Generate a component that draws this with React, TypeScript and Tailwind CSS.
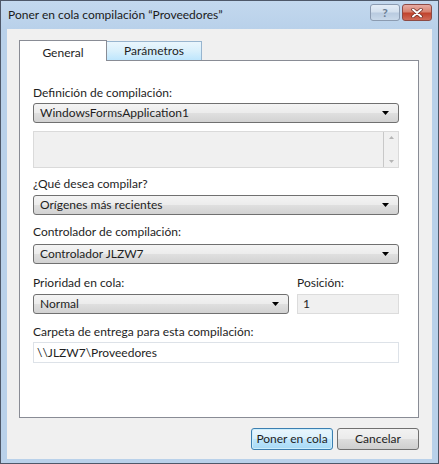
import React from 'react';

const FONT = { fontFamily: 'Lato, "Open Sans", "Noto Sans", sans-serif' };

const Arrow = () => (
  <svg width="7" height="4" viewBox="0 0 7 4" className="shrink-0">
    <path d="M0 0H7L3.5 4Z" fill="#000" />
  </svg>
);

const Combo = ({ value, className = '' }: { value: string; className?: string }) => (
  <div
    className={`h-[20px] flex items-center justify-between pl-[6px] pr-[9px] border border-[#707070] rounded-[3px] bg-[linear-gradient(to_bottom,#f4f4f4_0%,#ececec_48%,#dfdfdf_52%,#d2d2d2_100%)] text-[12px] text-[#1e1e1e] ${className}`}
  >
    <span className="leading-none">{value}</span>
    <Arrow />
  </div>
);

const Label = ({ children, className = '' }: { children: React.ReactNode; className?: string }) => (
  <div className={`h-[16px] leading-[16px] text-[12px] text-[#1e1e1e] ${className}`}>{children}</div>
);

export default function App() {
  return (
    <div style={FONT} className="w-[439px] h-[464px] border border-[#4e5869] bg-[#b9d1ea] flex flex-col">
      {/* Title bar */}
      <div className="h-[28px] flex items-start bg-[linear-gradient(to_bottom,#c3d8ee,#b9d1ea)]">
        <div className="pl-[7px] pt-[5px] text-[12px] text-[#1a1a1a] flex-1">Poner en cola compilación “Proveedores”</div>
        <div className="flex gap-[2px] pt-[3px] pr-[6px]">
          <div className="w-[30px] h-[17px] rounded-[3px] border border-[#8b9bb1] bg-[linear-gradient(to_bottom,#e4edf7_0%,#d3e0ee_45%,#b9cbe0_55%,#c9d9ea_100%)] flex items-center justify-center">
            <span className="text-[12px] font-bold text-[#6b7d93] leading-none">?</span>
          </div>
          <div className="w-[30px] h-[17px] rounded-[3px] border border-[#8d4a44] bg-[linear-gradient(to_bottom,#e8aca3_0%,#d7826f_45%,#c0432d_55%,#d06a57_100%)] flex items-center justify-center">
            <svg width="12" height="10" viewBox="0 0 12 10">
              <path d="M2 1.5L10 8.5M10 1.5L2 8.5" stroke="#6b2a22" strokeWidth="3.4" strokeLinecap="round" />
              <path d="M2 1.5L10 8.5M10 1.5L2 8.5" stroke="#fff" strokeWidth="2" strokeLinecap="round" />
            </svg>
          </div>
        </div>
      </div>

      {/* Client area */}
      <div className="mx-[6px] h-[430px] bg-[#f0f0f0] pl-[12px] pr-[13px] pt-[11px] flex flex-col">
        {/* Tabs */}
        <div className="flex items-end h-[20px]">
          <div className="relative z-10 w-[88px] h-[21px] -mb-px bg-white border border-b-0 border-[#898c95] flex justify-center pt-[3px] text-[12px] text-[#1e1e1e]">
            General
          </div>
          <div className="-ml-px w-[96px] h-[19px] border border-b-0 border-[#98b5cf] bg-[linear-gradient(to_bottom,#eaf6fd,#d9f0fc_50%,#bee6fd_100%)] flex justify-center items-center text-[12px] text-[#1e1e1e]">
            Parámetros
          </div>
        </div>

        {/* Panel */}
        <div className="h-[358px] bg-white border border-[#898c95] pl-[13px] pr-[19px] pt-[24px]">
          <Label>Definición de compilación:</Label>
          <Combo value="WindowsFormsApplication1" className="mt-[2px]" />
          <div className="mt-[8px] h-[37px] border border-[#dadada] bg-[#f0f0f0] flex justify-end">
            <div className="w-[15px] border-l border-[#c8c8c8] flex flex-col items-center justify-between py-[4px]">
              <svg width="5" height="3" viewBox="0 0 5 3"><path d="M2.5 0L5 3H0Z" fill="#b5b5b5" /></svg>
              <svg width="5" height="3" viewBox="0 0 5 3"><path d="M0 0H5L2.5 3Z" fill="#b5b5b5" /></svg>
            </div>
          </div>

          <Label className="mt-[8px]">¿Qué desea compilar?</Label>
          <Combo value="Orígenes más recientes" className="mt-[3px]" />

          <Label className="mt-[9px]">Controlador de compilación:</Label>
          <Combo value="Controlador JLZW7" className="mt-[4px]" />

          <div className="mt-[11px] flex gap-[8px]">
            <div className="w-[256px]">
              <Label>Prioridad en cola:</Label>
              <Combo value="Normal" className="mt-[3px]" />
            </div>
            <div className="flex-1">
              <Label>Posición:</Label>
              <div className="mt-[3px] h-[20px] border border-[#dcdcdc] bg-[#f0f0f0] pl-[5px] flex items-center text-[12px] text-[#1e1e1e]">1</div>
            </div>
          </div>

          <Label className="mt-[10px]">Carpeta de entrega para esta compilación:</Label>
          <div className="mt-[2px] h-[21px] border border-[#dde2e8] bg-white pl-[3px] flex items-center text-[12px] text-[#1e1e1e]">
            \\JLZW7\Proveedores
          </div>
        </div>

        {/* Buttons */}
        <div className="mt-[10px] flex justify-end gap-[4px]">
          <button className="w-[82px] h-[22px] rounded-[3px] border border-[#3c7fb1] bg-[linear-gradient(to_bottom,#eaf6fd_0%,#d9f0fc_48%,#bee6fd_52%,#a7d9f5_100%)] shadow-[inset_0_0_0_1px_#cdeefc] text-[12px] text-[#1e1e1e]">
            Poner en cola
          </button>
          <button className="w-[82px] h-[22px] rounded-[3px] border border-[#707070] bg-[linear-gradient(to_bottom,#f2f2f2_0%,#ebebeb_48%,#dddddd_52%,#cfcfcf_100%)] text-[12px] text-[#1e1e1e]">
            Cancelar
          </button>
        </div>
      </div>
    </div>
  );
}
